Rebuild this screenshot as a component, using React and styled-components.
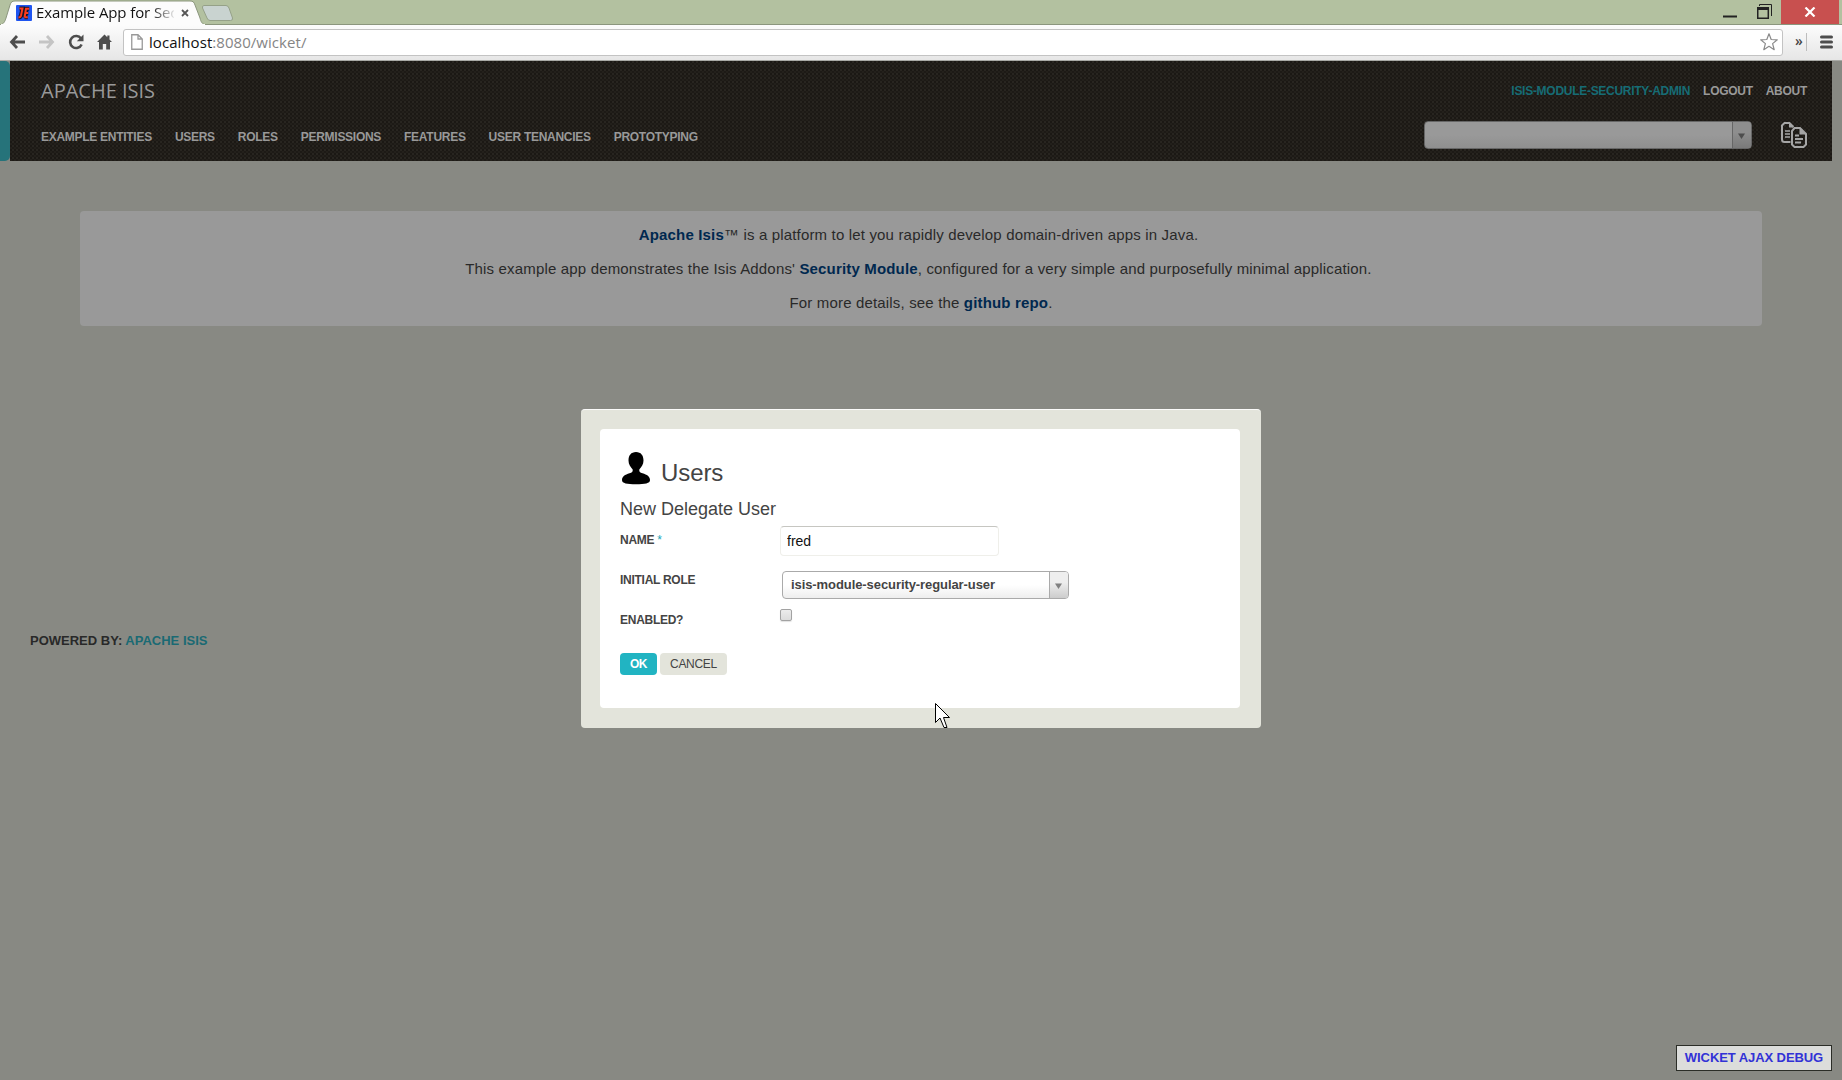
import React from "react";
import styled, { createGlobalStyle } from "styled-components";

const sans = `"Liberation Sans", Arial, sans-serif`;
const chromeFont = `"Open Sans", "Noto Sans", sans-serif`;

const Global = createGlobalStyle`
  * { box-sizing: border-box; }
  body { margin: 0; background: #888983; font-family: ${sans}; overflow: hidden; }
  a { text-decoration: none; color: inherit; }
  p { margin: 0; }
`;

const Window = styled.div`
  display: flex; flex-direction: column; width: 1842px; height: 1080px; overflow: hidden;
`;

/* browser chrome */
const TabStrip = styled.div`
  display: flex; align-items: flex-start; height: 25px; background: #b3c1a0; flex: none;
  border-bottom: 1px solid #8b967d;
`;
const Tab = styled.div`
  position: relative; width: 206px; height: 25px; flex: none;
`;
const TabShape = styled.svg`
  position: absolute; left: 0; top: 0; display: block;
`;
const TabBody = styled.div`
  position: relative; display: flex; align-items: center; height: 25px; padding: 1px 0 0 16px;
`;
const TabTitle = styled.span`
  margin: -2px 0 0 4px; width: 138px; white-space: nowrap;
  font: 15px/22px ${chromeFont}; letter-spacing: ${(p) => p.$ls}px;
  background: linear-gradient(90deg, #111 84%, rgba(17,17,17,0.1) 100%);
  background-clip: text; color: transparent;
`;
const CloseMark = styled.svg`margin-left: 7px;`;
const NewTab = styled.svg`margin: 5px 0 0 -5px; flex: none; position: relative;`;
const WinControls = styled.div`
  display: flex; margin-left: auto; margin-right: 3px; height: 24px;
`;
const WinButton = styled.div`
  width: ${(p) => p.$w}px; height: 24px; display: flex; justify-content: center; align-items: center;
  background: ${(p) => p.$bg || "transparent"};
`;
const Toolbar = styled.div`
  display: flex; align-items: center; height: 36px; flex: none; padding: 0 9px 1px 9px;
  background: linear-gradient(#fcfcfc, #e6e6e6); border-bottom: 1px solid #a9aaa6;
`;
const ToolIcon = styled.svg`flex: none; margin-right: ${(p) => p.$gap}px;`;
const UrlBar = styled.div`
  display: flex; align-items: center; width: 1660px; height: 27px; background: #fff; flex: none;
  border: 1px solid #c3c3c3; border-radius: 3px; padding: 0 4px 0 7px;
`;
const Url = styled.span`
  flex: 1; margin: -1px 0 0 6px; font: 15px/22px ${chromeFont}; color: #858585; letter-spacing: 0.05px;
  b { font-weight: 400; color: #111; }
`;
const Overflow = styled.span`
  margin: -3px 0 0 12px; font: 600 14px/20px ${chromeFont}; color: #444; width: 11px;
`;
const Divider = styled.span`
  width: 1px; height: 18px; background: #bdbdbd; margin-right: 13px;
`;

/* page */
const Header = styled.header`
  display: flex; height: 100px; flex: none; padding-right: 10px;
`;
const Accent = styled.div`
  width: 10px; background: #26737a; border-radius: 0 5px 5px 0;
`;
const HeaderBody = styled.div`
  flex: 1; display: flex; flex-direction: column; padding: 15px 25px 0 31px;
  background-color: #211e1a;
  background-image:
    conic-gradient(from 0deg, #282520 25%, #1d1a16 0 50%, #23201b 0 75%, #1b1814 0);
  background-size: 4px 4px;
`;
const HeaderRow = styled.div`
  display: flex; align-items: center; justify-content: space-between; flex: none; height: ${(p) => p.$h}px;
`;
const Brand = styled.span`
  font: 20px/28px ${chromeFont}; color: #999; letter-spacing: ${(p) => p.$ls}px;
`;
const Nav = styled.nav`
  display: flex; gap: ${(p) => p.$gap}px; padding: ${(p) => p.$pad || 0};
`;
const NavLink = styled.a`
  font: bold 12px/16px ${sans}; color: ${(p) => p.$color || "#999999"};
  letter-spacing: -0.28px; white-space: nowrap;
`;
const SearchGroup = styled.div`display: flex; align-items: center; gap: 29px;`;
const SelectBox = styled.div`
  display: flex; width: ${(p) => p.$w}px; height: 28px; border-radius: 4px; overflow: hidden;
  border: 1px solid ${(p) => (p.$dim ? "#666" : "#aaa")};
  background: ${(p) => (p.$dim ? "linear-gradient(#999 50%, #8f8f8f)" : "linear-gradient(#fff 50%, #eee)")};
`;
const SelectValue = styled.span`
  flex: 1; padding: 0 0 0 8px; font: bold 13px/25px ${sans}; color: #444; letter-spacing: ${(p) => p.$ls || 0}px;
`;
const SelectArrow = styled.span`
  display: flex; align-items: center; justify-content: center; width: 19px; padding: 2px 2px 0 0;
  border-left: 1px solid ${(p) => (p.$dim ? "#666" : "#aaa")};
  background: ${(p) => (p.$dim ? "linear-gradient(#8e8e8e 40%, #7a7a7a)" : "linear-gradient(#eee 40%, #ccc)")};
`;

const Intro = styled.section`
  margin: 50px 80px 0; height: 115px; background: #999; border-radius: 4px; flex: none;
  display: flex; flex-direction: column; align-items: center; padding: 7px 5px 0 0;
`;
const IntroLine = styled.p`
  font: 15px/34px ${sans}; color: #292929; letter-spacing: 0.165px; padding-left: ${(p) => p.$indent || 0}px;
  a { font-weight: bold; color: #00284f; }
`;
const Footer = styled.footer`
  margin: 307px 0 0 30px; font: bold 13px/16px ${sans}; color: #292929;
  a { color: #1a6a73; }
`;
const DebugLink = styled.a`
  align-self: flex-end; margin: auto 10px 9px 0; width: 156px; height: 26px; text-align: center;
  border: 1px solid #2b2d27; background: #dcdddb; color: #3232d6; white-space: nowrap;
  font: bold 13px/23px ${sans}; letter-spacing: ${(p) => p.$ls}px;
`;

/* dialog */
const Dialog = styled.div`
  position: absolute; left: 581px; top: 409px; width: 680px; height: 319px; padding: 19px 21px 20px 19px;
  background: #e3e4db; border-top: 1px solid #fbfbfa; border-radius: 4px;
`;
const Card = styled.div`
  height: 279px; background: #fff; border-radius: 4px; padding: 23px 20px 0;
`;
const TitleRow = styled.div`display: flex; align-items: flex-start; height: 45px; padding-left: 2px;`;
const Title = styled.h1`
  margin: 5px 0 0 11px; font: 24px/32px ${sans}; color: #444; letter-spacing: -0.1px;
`;
const SubTitle = styled.h2`
  margin: 0 0 -1px; font: 18px/24px ${sans}; color: #444;
`;
const Field = styled.div`
  display: flex; height: ${(p) => p.$h}px; align-items: flex-start;
`;
const Label = styled.label`
  width: 160px; padding-top: ${(p) => p.$top}px; font: bold 12px/16px ${sans}; color: #444; letter-spacing: -0.27px;
  i { font-style: normal; font-weight: 400; color: #21a5b8; }
`;
const TextInput = styled.input`
  width: 219px; height: 30px; margin: 6px 0 0; border: 1px solid #efefea; border-top-color: #c6c6c1;
  border-radius: 4px; padding: 0 6px; font: 14px/20px ${sans}; color: #111; outline: none;
`;
const SelectWrap = styled.div`padding: 11px 0 0 2px;`;
const CheckBox = styled.span`
  width: 12px; height: 12px; margin-top: 9px; border: 1px solid #a2a2a2; border-radius: 2px;
  background: linear-gradient(#ececec, #dcdcdc); box-shadow: 0 1px 1px rgba(0,0,0,0.12);
`;
const Buttons = styled.div`display: flex; gap: 3px; padding-top: 13px;`;
const Button = styled.button`
  width: ${(p) => p.$w}px; height: 22px; border: 0; border-radius: 4px; padding: 0; text-align: center;
  font: ${(p) => (p.$primary ? "bold" : "normal")} 12px/22px ${sans};
  letter-spacing: ${(p) => (p.$primary ? "-0.6px" : "-0.3px")};
  color: ${(p) => (p.$primary ? "#fff" : "#444")};
  background: ${(p) => (p.$primary ? "#21b4c2" : "#e3e4db")};
`;
const Pointer = styled.svg`position: absolute; left: 935px; top: 703px;`;

const Select = ({ width, dim, value, ls }) => (
  <SelectBox $w={width} $dim={dim}>
    <SelectValue $ls={ls}>{value}</SelectValue>
    <SelectArrow $dim={dim}>
      <svg width="7" height="6"><path d="M0 0.5h7L3.5 6z" fill={dim ? "#4d4d4d" : "#808080"} /></svg>
    </SelectArrow>
  </SelectBox>
);

const menu = ["EXAMPLE ENTITIES", "USERS", "ROLES", "PERMISSIONS", "FEATURES", "USER TENANCIES", "PROTOTYPING"];

const BrowserChrome = () => (
  <>
    <TabStrip>
      <Tab>
        <TabShape width="206" height="25">
          <path d="M0 25C4 24 5 21 6 18L10 5C11 2 12 1 15 1H190C193 1 194 2 195 5L200 18C201 22 202 24 206 25Z" fill="#fcfcfc" stroke="#8b967d" />
          <path d="M1 25H205" stroke="#fcfcfc" strokeWidth="2" />
        </TabShape>
        <TabBody>
          <svg width="16" height="16" viewBox="0 0 16 16">
            <rect width="16" height="16" rx="1" fill="#1f55f0" />
            <path d="M3.500 3.500H6.500L5 10.500Q4.500 12.500 2.500 12.500M8.500 12.500L10 3.800H13.200M9.300 8H12.300M8.500 12.300H11.800" fill="none" stroke="#15152a" strokeWidth="4" />
            <path d="M3.500 3.500H6.500L5 10.500Q4.500 12.500 2.500 12.500M8.500 12.500L10 3.800H13.200M9.300 8H12.300M8.500 12.300H11.800" fill="none" stroke="#ff3b1d" strokeWidth="2" />
          </svg>
          <TabTitle $ls={-0.1}>Example App for Sec</TabTitle>
          <CloseMark width="8" height="8"><path d="M1 1l6 6M7 1L1 7" stroke="#555" strokeWidth="1.8" /></CloseMark>
        </TabBody>
      </Tab>
      <NewTab width="33" height="17">
        <path d="M3 .5H25Q27 .5 28 3L31.500 13Q32 15.500 29.500 15.500H9Q7 15.500 6 13L1.500 3Q1 .5 3 .5Z" fill="#c9d3d0" stroke="#95a188" />
      </NewTab>
      <WinControls>
        <WinButton $w={34}><svg width="14" height="24"><path d="M0 16.500H14" stroke="#222" strokeWidth="2" /></svg></WinButton>
        <WinButton $w={34}>
          <svg width="15" height="24">
            <path d="M2.500 6V4.500H14.500V16" fill="none" stroke="#222" />
            <path d="M.75 18.300V8H11.300V18.300Z" fill="none" stroke="#222" strokeWidth="1.500" />
            <path d="M0 8.500H12" stroke="#222" strokeWidth="3" />
          </svg>
        </WinButton>
        <WinButton $w={58} $bg="#c8504f">
          <svg width="12" height="10"><path d="M1.500 .5l9 9M10.500 .5l-9 9" stroke="#fff" strokeWidth="2.200" /></svg>
        </WinButton>
      </WinControls>
    </TabStrip>
    <Toolbar>
      <ToolIcon $gap={12} width="17" height="16"><path d="M8 2L2.500 8L8 14M2.500 8H16" fill="none" stroke="#4d4d4d" strokeWidth="2.800" /></ToolIcon>
      <ToolIcon $gap={13} width="17" height="16"><path d="M9 2L14.500 8L9 14M14.500 8H1" fill="none" stroke="#c4c4c4" strokeWidth="2.800" /></ToolIcon>
      <ToolIcon $gap={13} width="16" height="16">
        <path d="M13 4.500A6 6 0 1 0 13.600 10.500" fill="none" stroke="#4d4d4d" strokeWidth="2.600" />
        <path d="M15.500 .5V7.200H8.800Z" fill="#4d4d4d" />
      </ToolIcon>
      <ToolIcon $gap={11} width="15" height="16">
        <path d="M7.500 .5L0 8H2V15.500H5.800V10H9.200V15.500H13V8H15L12.500 5.500V1.500H10.300V3.300Z" fill="#4d4d4d" />
      </ToolIcon>
      <UrlBar>
        <svg width="12" height="16"><path d="M.75 .75H7L11.250 5V15.250H.75ZM7 .75V5H11.250" fill="#fff" stroke="#999" strokeWidth="1.300" /></svg>
        <Url><b>localhost</b>:8080/wicket/</Url>
        <svg width="18" height="18" viewBox="0 0 18 18">
          <path d="M9 .8L11.200 6.500L17.300 6.800L12.600 10.600L14.200 16.700L9 13.300L3.800 16.700L5.400 10.600L.7 6.800L6.800 6.500Z" fill="#fff" stroke="#8a8a8a" strokeWidth="1.200" strokeLinejoin="round" />
        </svg>
      </UrlBar>
      <Overflow>»</Overflow>
      <Divider />
      <svg width="13" height="14"><path d="M1.500 2H11.500M1.500 7H11.500M1.500 12H11.500" stroke="#4d4d4d" strokeWidth="3" strokeLinecap="round" /></svg>
    </Toolbar>
  </>
);

const CopyIcon = () => (
  <svg width="26" height="26" viewBox="0 0 26 26" fill="none" stroke="#a5a5a5" strokeWidth="2">
    <path d="M9.500 20H3.500Q1 20 1 17.500V3.500L3.500 1H8.500L12.500 5" />
    <path d="M8 0V5.500H12.500Z" fill="#a5a5a5" stroke="none" />
    <path d="M4 9H9M4 12H9M4 15H9" strokeWidth="1.500" />
    <path d="M11 9L13.500 6H19L25 12V22.500L22.500 25H13.500L11 22.500Z" />
    <path d="M18.500 5.500V12.500H25.500Z" fill="#a5a5a5" stroke="none" />
    <path d="M14 13.500H18M14 17H22M14 20.500H20" strokeWidth="1.800" />
  </svg>
);

export default function App() {
  return (
    <Window>
      <Global />
      <BrowserChrome />
      <Header>
        <Accent />
        <HeaderBody>
          <HeaderRow $h={30}>
            <Brand $ls={0}>APACHE ISIS</Brand>
            <Nav $gap={13}>
              <NavLink $color="#166c75">ISIS-MODULE-SECURITY-ADMIN</NavLink>
              <NavLink>LOGOUT</NavLink>
              <NavLink>ABOUT</NavLink>
            </Nav>
          </HeaderRow>
          <HeaderRow $h={58}>
            <Nav $gap={23} $pad="4px 0 0 0">{menu.map((m) => <NavLink key={m}>{m}</NavLink>)}</Nav>
            <SearchGroup>
              <Select width={328} dim value="" />
              <CopyIcon />
            </SearchGroup>
          </HeaderRow>
        </HeaderBody>
      </Header>
      <Intro>
        <IntroLine><a>Apache Isis</a>™ is a platform to let you rapidly develop domain-driven apps in Java.</IntroLine>
        <IntroLine>This example app demonstrates the Isis Addons' <a>Security Module</a>, configured for a very simple and purposefully minimal application.</IntroLine>
        <IntroLine $indent={5}>For more details, see the <a>github repo</a>.</IntroLine>
      </Intro>
      <Footer>POWERED BY: <a>APACHE ISIS</a></Footer>
      <DebugLink $ls={-0.08}>WICKET AJAX DEBUG</DebugLink>

      <Dialog>
        <Card>
          <TitleRow>
            <svg width="28" height="33" viewBox="0 0 28 33">
              <path d="M14 0C19 0 21.500 3.500 21.500 8.500C21.500 12.500 19.500 15 17.300 17.500C17 20 18 20.500 20.500 21.300C25 22.700 28 24.500 28 28C28 31.500 23 32.200 14 32.200C5 32.200 0 31.500 0 28C0 24.500 3 22.700 7.500 21.300C10 20.500 11 20 10.700 17.500C8.500 15 6.500 12.500 6.500 8.500C6.500 3.500 9 0 14 0Z" fill="#000" />
            </svg>
            <Title>Users</Title>
          </TitleRow>
          <SubTitle>New Delegate User</SubTitle>
          <Field $h={40}>
            <Label $top={12}>NAME <i>*</i></Label>
            <TextInput defaultValue="fred" />
          </Field>
          <Field $h={40}>
            <Label $top={12}>INITIAL ROLE</Label>
            <SelectWrap><Select width={287} value="isis-module-security-regular-user" ls={-0.08} /></SelectWrap>
          </Field>
          <Field $h={40}>
            <Label $top={12}>ENABLED?</Label>
            <CheckBox />
          </Field>
          <Buttons>
            <Button $w={37} $primary>OK</Button>
            <Button $w={67}>CANCEL</Button>
          </Buttons>
        </Card>
      </Dialog>
      <Pointer width="15" height="26">
        <path d="M.5 .5V19.500L5 15L9 24.500H12L8.500 14.500H14.500Z" fill="#fff" stroke="#000" />
      </Pointer>
    </Window>
  );
}
